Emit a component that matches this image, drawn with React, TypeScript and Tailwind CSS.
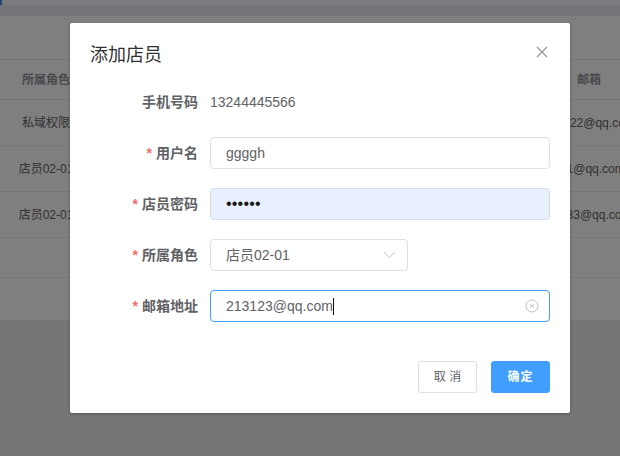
import React from "react";

function FormRow({
  label,
  required,
  children,
}: {
  label: string;
  required?: boolean;
  children: React.ReactNode;
}) {
  return (
    <div className="flex items-center h-[32px]">
      <div className="w-[120px] shrink-0 pr-[12px] text-right text-[14px] font-bold leading-[32px] text-[#606266]">
        {required && <span className="mr-[4px] text-[#f56c6c]">*</span>}
        {label}
      </div>
      <div className="flex-1 flex items-center">{children}</div>
    </div>
  );
}

function TableRow({
  h,
  left,
  right,
  header,
}: {
  h: string;
  left?: string;
  right?: string;
  header?: boolean;
}) {
  const txt = header ? "font-bold text-[#909399]" : "text-[#606266]";
  return (
    <div className={`flex items-center border-b border-[#ebeef5] text-[12px] ${h} ${txt}`}>
      <div className="w-[92px] shrink-0 flex justify-center whitespace-nowrap">{left}</div>
      <div className="flex-1" />
      <div className="w-[62px] shrink-0 flex justify-center whitespace-nowrap">{right}</div>
    </div>
  );
}

export default function App() {
  return (
    <div className="relative w-[620px] h-[456px] overflow-hidden bg-[#ecedf3] font-['Liberation_Sans','Noto_Sans_CJK_SC',sans-serif]">
      {/* page */}
      <div className="h-[5px] bg-[#f7f7fa] flex">
        <div className="w-[2px] bg-[#4a86e8]" />
      </div>
      <div className="h-[11px] bg-[#e8eaf0]" />
      <div className="h-[304px] bg-white pt-[43px]">
        <div className="border-t border-[#ebeef5]">
          <TableRow h="h-[40px]" header left="所属角色" right="邮箱" />
          <TableRow h="h-[46px]" left="私域权限" right="123122@qq.com" />
          <TableRow h="h-[46px]" left="店员02-01" right="321@qq.com" />
          <TableRow h="h-[46px]" left="店员02-01" right="12333@qq.com" />
          <TableRow h="h-[40px]" />
        </div>
      </div>

      {/* overlay */}
      <div className="absolute inset-0 bg-black/50">
        <div className="relative ml-[70px] mt-[23px] w-[500px] rounded-[2px] bg-white shadow-[0_1px_3px_rgba(0,0,0,0.3)]">
          <div className="px-[20px] pt-[20px] pb-[10px]">
            <div className="text-[18px] leading-[24px] text-[#303133]">添加店员</div>
          </div>
          <button className="absolute top-[21px] right-[20px] w-[16px] h-[16px] flex items-center justify-center">
            <svg width="16" height="16" viewBox="0 0 16 16">
              <path d="M3 3 L13 13 M13 3 L3 13" stroke="#909399" strokeWidth="1.1" fill="none" />
            </svg>
          </button>

          <div className="px-[20px] pt-[9px] flex flex-col gap-[19px]">
            <FormRow label="手机号码">
              <span className="text-[14px] text-[#606266]">13244445566</span>
            </FormRow>
            <FormRow label="用户名" required>
              <div className="w-[340px] h-[32px] rounded-[4px] border border-[#dcdfe6] px-[15px] flex items-center text-[14px] text-[#606266]">
                ggggh
              </div>
            </FormRow>
            <FormRow label="店员密码" required>
              <div className="w-[340px] h-[32px] rounded-[4px] border border-[#d5dbe6] bg-[#e8f0fe] px-[15px] flex items-center text-[16px] text-[#1a1a1a] tracking-[0.2px]">
                ••••••
              </div>
            </FormRow>
            <FormRow label="所属角色" required>
              <div className="w-[198px] h-[32px] rounded-[4px] border border-[#dcdfe6] pl-[15px] pr-[11px] flex items-center justify-between text-[14px] text-[#606266]">
                <span>店员02-01</span>
                <svg width="13" height="8" viewBox="0 0 13 8">
                  <path d="M1 1 L6.5 6.5 L12 1" stroke="#c0c4cc" strokeWidth="1" fill="none" />
                </svg>
              </div>
            </FormRow>
            <FormRow label="邮箱地址" required>
              <div className="w-[340px] h-[32px] rounded-[4px] border border-[#409eff] pl-[15px] pr-[10px] flex items-center justify-between text-[14px] text-[#606266]">
                <span className="flex items-center">
                  213123@qq.com
                  <span className="inline-block w-[1px] h-[17px] bg-[#111]" />
                </span>
                <svg width="14" height="14" viewBox="0 0 14 14">
                  <circle cx="7" cy="7" r="6" stroke="#c0c4cc" strokeWidth="1" fill="none" />
                  <path d="M5 5 L9 9 M9 5 L5 9" stroke="#c0c4cc" strokeWidth="1" fill="none" />
                </svg>
              </div>
            </FormRow>
          </div>

          <div className="px-[20px] pt-[39px] pb-[20px] flex justify-end gap-[14px]">
            <button className="w-[59px] h-[32px] rounded-[3px] border border-[#dcdfe6] bg-white text-[12px] text-[#606266] flex items-center justify-center">
              取 消
            </button>
            <button className="w-[59px] h-[32px] rounded-[3px] border border-[#409eff] bg-[#409eff] text-[12px] font-bold tracking-[1px] text-white flex items-center justify-center">
              确定
            </button>
          </div>
        </div>
      </div>
    </div>
  );
}
